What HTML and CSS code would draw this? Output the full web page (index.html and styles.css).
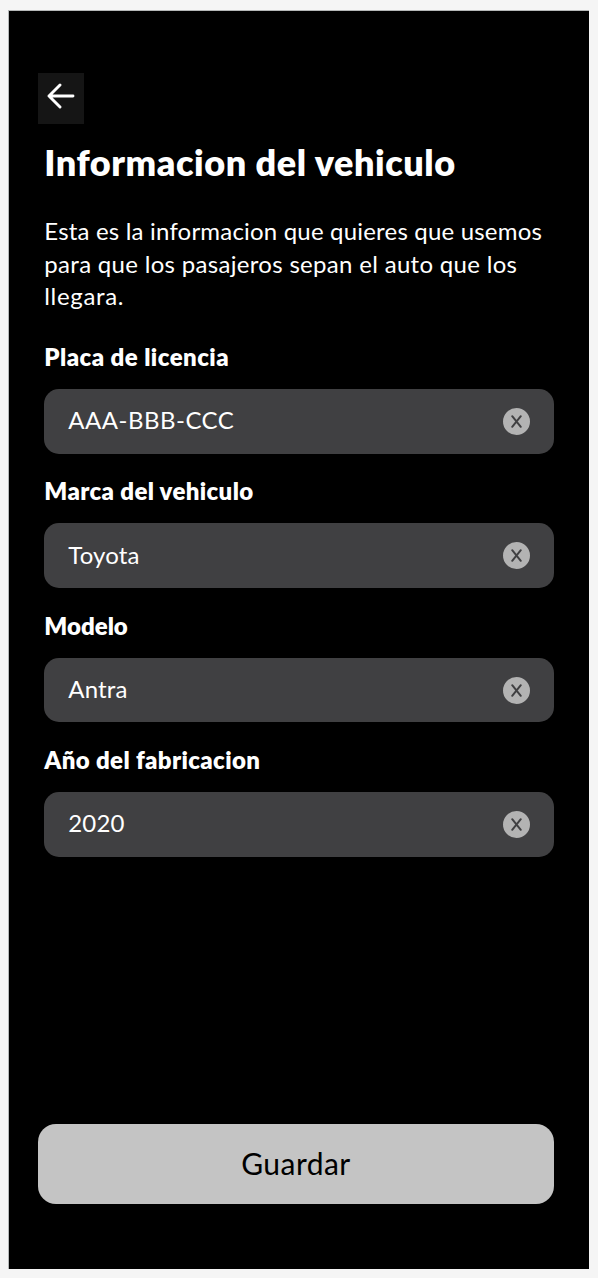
FILE: index.html
```html
<!DOCTYPE html>
<html lang="es">
<head>
<meta charset="utf-8">
<title>Informacion del vehiculo</title>
<link rel="stylesheet" href="styles.css">
</head>
<body>
<main class="screen">
  <button class="back" aria-label="Volver">
    <svg class="back-icon" viewBox="0 0 28 26"><path d="M26 13H2M13 2 2 13l11 11"/></svg>
  </button>
  <h1 class="title">Informacion del vehiculo</h1>
  <p class="intro"><span class="intro-first">Esta es la informacion que quieres que usemos</span><br><span class="intro-second">para que los pasajeros sepan el auto que los</span><br><span class="intro-last">llegara.</span></p>
  <form class="form">
    <div class="group">
      <div class="label label-plate">Placa de licencia</div>
      <div class="field"><span class="value value-plate">AAA-BBB-CCC</span><svg class="clear" viewBox="0 0 27 27"><circle cx="13.5" cy="13.5" r="13.5"/><path d="m9.2 8.2 8.6 10.6M17.8 8.2 9.2 18.8"/></svg></div>
    </div>
    <div class="group">
      <div class="label">Marca del vehiculo</div>
      <div class="field"><span class="value">Toyota</span><svg class="clear" viewBox="0 0 27 27"><circle cx="13.5" cy="13.5" r="13.5"/><path d="m9.2 8.2 8.6 10.6M17.8 8.2 9.2 18.8"/></svg></div>
    </div>
    <div class="group">
      <div class="label label-model">Modelo</div>
      <div class="field"><span class="value">Antra</span><svg class="clear" viewBox="0 0 27 27"><circle cx="13.5" cy="13.5" r="13.5"/><path d="m9.2 8.2 8.6 10.6M17.8 8.2 9.2 18.8"/></svg></div>
    </div>
    <div class="group">
      <div class="label">Año del fabricacion</div>
      <div class="field"><span class="value">2020</span><svg class="clear" viewBox="0 0 27 27"><circle cx="13.5" cy="13.5" r="13.5"/><path d="m9.2 8.2 8.6 10.6M17.8 8.2 9.2 18.8"/></svg></div>
    </div>
  </form>
  <button class="save">Guardar</button>
</main>
</body>
</html>
```
FILE: styles.css
```css
* { box-sizing: border-box; }
body {
  margin: 0;
  padding: 11px 9px 9px;
  height: 1278px;
  background: #f5f5f5;
  font-family: Lato, "Noto Sans", sans-serif;
  overflow: hidden;
}
.screen {
  display: flex;
  flex-direction: column;
  height: 1258px;
  padding: 62px 35.4px 65.3px 29.3px;
  background: #000;
  color: #fff;
  box-shadow: 0 0 0 1px #b5b8b8;
  clip-path: inset(-1px 0 0 -1px);
}
.back {
  display: flex;
  align-items: flex-start;
  width: 46px;
  height: 51.3px;
  padding: 10px 0 0 9px;
  border: 0;
  background: #151515;
}
.back-icon { display: block; flex: none; width: 28px; height: 26px; }
.back-icon path {
  fill: none;
  stroke: #fff;
  stroke-width: 2.9;
  stroke-linecap: round;
  stroke-linejoin: round;
}
.title {
  margin: 13.7px 0 0 6px;
  font-size: 36px;
  font-weight: 800;
  line-height: 49px;
  letter-spacing: 0.55px;
  white-space: nowrap;
}
.intro {
  margin: 28px 0 0 6px;
  font-size: 24px;
  line-height: 32.6px;
  white-space: nowrap;
}
.intro-first { letter-spacing: 0.19px; }
.intro-second { letter-spacing: 0.31px; }
.intro-last { letter-spacing: 0.65px; }
.form { display: flex; flex-direction: column; gap: 21.7px; margin: 28.2px 0 0 6px; }
.label {
  height: 32px;
  font-size: 24px;
  font-weight: 800;
  line-height: 32px;
  letter-spacing: 0.36px;
  white-space: nowrap;
}
.label-plate { letter-spacing: 0.45px; }
.label-model { letter-spacing: 0; }
.field {
  display: flex;
  align-items: center;
  justify-content: space-between;
  height: 64.7px;
  margin-top: 16px;
  padding: 0 23.3px 0 24px;
  border-radius: 15px;
  background: #404042;
}
.value {
  padding-bottom: 2px;
  font-size: 24px;
  line-height: 32px;
  letter-spacing: 0.15px;
}
.value-plate { letter-spacing: 0.5px; }
.clear { width: 27px; height: 27px; }
.clear circle { fill: #b3b3b3; }
.clear path { fill: none; stroke: #404042; stroke-width: 2; stroke-linecap: round; }
.save {
  flex: none;
  height: 79.7px;
  margin-top: auto;
  padding: 0 0 2px;
  border: 0;
  border-radius: 18px;
  background: #c4c4c4;
  color: #000;
  font-family: inherit;
  font-size: 30px;
  letter-spacing: 0.45px;
}
```
